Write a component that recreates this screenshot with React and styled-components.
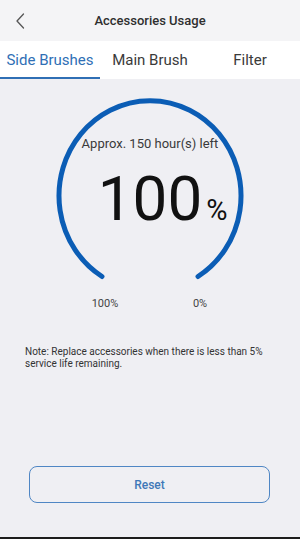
import React, { useState } from "react";
import styled, { createGlobalStyle } from "styled-components";

const Global = createGlobalStyle`
  html, body { margin: 0; padding: 0; }
  body { font-family: Roboto, "Noto Sans", Arial, sans-serif; background: #efeff3; }
  * { box-sizing: border-box; }
`;

const Screen = styled.div`
  width: 300px;
  height: 539px;
  display: flex;
  flex-direction: column;
  background: #efeff3;
  overflow: hidden;
`;

const Header = styled.header`
  height: 41px;
  display: grid;
  grid-template-columns: 40px 1fr 40px;
  align-items: center;
  background: #f4f4f6;
`;

const BackButton = styled.button`
  border: 0;
  background: none;
  padding: 0 0 0 15px;
  height: 41px;
  display: flex;
  align-items: center;
  cursor: pointer;
`;

const Title = styled.h1`
  margin: 0;
  text-align: center;
  font-size: 13px;
  font-weight: 500;
  color: #2f2f2f;
  line-height: 41px;
`;

const Tabs = styled.nav`
  height: 38px;
  display: grid;
  grid-template-columns: repeat(3, 1fr);
  background: #ffffff;
`;

const Tab = styled.button`
  border: 0;
  background: none;
  padding: 0;
  font-family: inherit;
  font-size: 15px;
  color: ${(p) => (p.$active ? "#2f6fb5" : "#3a3a3a")};
  border-bottom: 2px solid ${(p) => (p.$active ? "#2f6fb5" : "transparent")};
  padding-top: 2px;
  cursor: pointer;
`;

const Content = styled.main`
  flex: 1;
  display: flex;
  flex-direction: column;
`;

const Gauge = styled.div`
  margin: 16px auto 0;
  width: 200px;
  height: 190px;
  display: grid;
  > * { grid-area: 1 / 1; }
`;

const Readout = styled.div`
  padding-top: 41px;
  display: flex;
  flex-direction: column;
  align-items: center;
`;

const Remaining = styled.div`
  font-size: 13px;
  line-height: 15px;
  color: #3a3a3a;
`;

const Percent = styled.div`
  margin-top: 17px;
  width: 100%;
  display: grid;
  grid-template-columns: 1fr auto 1fr;
  align-items: baseline;
  color: #111;
`;

const Value = styled.span`
  grid-column: 2;
  font-size: 62px;
  line-height: 62px;
`;

const Unit = styled.span`
  font-size: 29px;
  margin-left: 4px;
`;

const Scale = styled.div`
  margin-top: 12px;
  padding-left: 5px;
  display: grid;
  grid-template-columns: 60px 60px;
  column-gap: 35px;
  justify-content: center;
`;

const ScaleLabel = styled.span`
  text-align: center;
  font-size: 11px;
  line-height: 13px;
  color: #444;
`;

const Note = styled.p`
  margin: 36px 0 0;
  padding: 0 25px;
  font-size: 10px;
  line-height: 12px;
  color: #333;
`;

const ResetButton = styled.button`
  margin: auto 30px 34px 29px;
  height: 37px;
  border: 1.5px solid #4f86c4;
  border-radius: 8px;
  background: transparent;
  font-family: inherit;
  font-size: 12px;
  font-weight: 500;
  color: #3f78b8;
  cursor: pointer;
`;

const NavEdge = styled.div`
  height: 2px;
  background: #1c1c1c;
`;

function Chevron() {
  return (
    <svg width="10" height="16" viewBox="0 0 10 16">
      <path d="M8.5 1 L2 8 L8.5 15" fill="none" stroke="#555" strokeWidth="1.3" strokeLinecap="round" strokeLinejoin="round" />
    </svg>
  );
}

function Arc() {
  return (
    <svg width="200" height="190" viewBox="0 0 200 190">
      <path
        d="M52 181.5 A91 95 0 1 1 148 181.5"
        fill="none"
        stroke="#0b5db5"
        strokeWidth="5"
        strokeLinecap="round"
      />
    </svg>
  );
}

const tabs = ["Side Brushes", "Main Brush", "Filter"];

export default function App() {
  const [active, setActive] = useState(0);
  return (
    <Screen>
      <Global />
      <Header>
        <BackButton aria-label="Back">
          <Chevron />
        </BackButton>
        <Title>Accessories Usage</Title>
        <span />
      </Header>
      <Tabs>
        {tabs.map((t, i) => (
          <Tab key={t} $active={i === active} onClick={() => setActive(i)}>
            {t}
          </Tab>
        ))}
      </Tabs>
      <Content>
        <Gauge>
          <Arc />
          <Readout>
            <Remaining>Approx. 150 hour(s) left</Remaining>
            <Percent>
              <Value>100</Value>
              <Unit>%</Unit>
            </Percent>
          </Readout>
        </Gauge>
        <Scale>
          <ScaleLabel>100%</ScaleLabel>
          <ScaleLabel>0%</ScaleLabel>
        </Scale>
        <Note>
          Note: Replace accessories when there is less than 5% service life remaining.
        </Note>
        <ResetButton>Reset</ResetButton>
      </Content>
      <NavEdge />
    </Screen>
  );
}
